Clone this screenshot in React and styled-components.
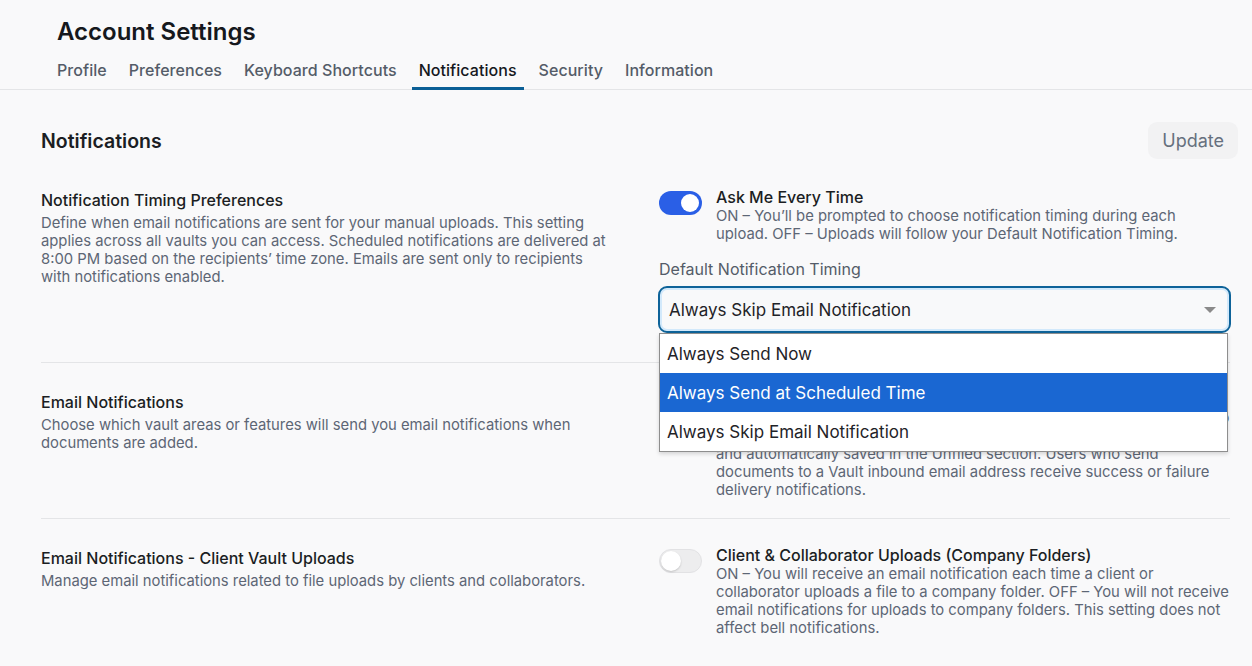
import React, { useState } from 'react';
import styled, { createGlobalStyle } from 'styled-components';

const GlobalStyle = createGlobalStyle`
  * { box-sizing: border-box; }
  body {
    margin: 0;
    background: #f9f9fa;
    font-family: Inter, "Liberation Sans", sans-serif;
    color: #1f2328;
  }
`;

// Header with page title and tab strip
const Header = styled.header`
  padding: 17px 0 0 50px;
  border-bottom: 1px solid #e4e5e7;
`;

const PageTitle = styled.h1`
  margin: 0 0 9px 7px;
  font-size: 24px;
  line-height: 30px;
  font-weight: 600;
  color: #15181d;
`;

const Tabs = styled.nav`
  display: flex;
  gap: 8px;
`;

const Tab = styled.button`
  background: none;
  border: none;
  border-bottom: 3px solid ${p => (p.$active ? '#0b5f96' : 'transparent')};
  margin-bottom: -1px;
  padding: 4px 7px 7px;
  font-family: inherit;
  font-size: 16px;
  line-height: 20px;
  font-weight: 500;
  letter-spacing: 0.05px;
  color: ${p => (p.$active ? '#15181d' : '#545c68')};
  cursor: pointer;
`;

const Content = styled.main`
  padding: 32px 14px 0 41px;
`;

const SectionHead = styled.div`
  display: flex;
  align-items: center;
  justify-content: space-between;
  margin-bottom: 2px;
`;

const SectionTitle = styled.h2`
  margin: 0;
  font-size: 19.5px;
  font-weight: 600;
  color: #1b1e23;
`;

const UpdateButton = styled.button`
  height: 37px;
  padding: 0 14px;
  border: none;
  border-radius: 9px;
  background: #f2f2f3;
  font-family: inherit;
  font-size: 18px;
  color: #66707e;
`;

const Rows = styled.div`
  margin-right: 8px;
`;

const Row = styled.section`
  display: grid;
  grid-template-columns: 1fr 1fr;
  gap: 47px;
  padding: 26px 0 19px;
  border-top: ${p => (p.$first ? 'none' : '1px solid #e4e5e7')};
`;

const RowInfo = styled.div`
  padding-top: 1px;
`;

const RowTitle = styled.h3`
  margin: 0 0 2px;
  font-size: 16px;
  line-height: 24px;
  font-weight: 500;
  color: #1b1e23;
`;

const Desc = styled.p`
  margin: 0;
  font-size: 14.8px;
  line-height: 18px;
  color: #5d6675;
`;

const Controls = styled.div`
  display: flex;
  flex-direction: column;
`;

const ToggleItem = styled.div`
  display: flex;
  align-items: flex-start;
  gap: 14px;
`;

const Switch = styled.button`
  position: relative;
  flex: none;
  width: 43px;
  height: 24px;
  margin-top: 4px;
  padding: 0;
  border-radius: 12px;
  border: ${p => (p.$on ? 'none' : '1px solid #e2e2e4')};
  background: ${p => (p.$on ? '#2a5fe6' : '#ededee')};
  cursor: pointer;

  &::after {
    content: '';
    position: absolute;
    top: ${p => (p.$on ? '3px' : '1px')};
    left: ${p => (p.$on ? '22px' : '1px')};
    width: ${p => (p.$on ? '18px' : '20px')};
    height: ${p => (p.$on ? '18px' : '20px')};
    border-radius: 50%;
    background: #fff;
    box-shadow: ${p => (p.$on ? 'none' : '0 1px 2px rgba(0,0,0,0.18)')};
  }
`;

const ToggleTitle = styled.div`
  font-size: 16px;
  line-height: 20px;
  font-weight: 500;
  color: #1b1e23;
`;

const FieldGroup = styled.div`
  margin: 16px 0 10px;
`;

const FieldLabel = styled.div`
  margin-bottom: 7px;
  font-size: 16px;
  line-height: 20px;
  color: #545c68;
`;

const SelectWrap = styled.div`
  position: relative;
  margin: 0 -1px 0 -1px;
`;

const SelectBox = styled.div`
  display: flex;
  align-items: center;
  justify-content: space-between;
  height: 47px;
  padding: 0 13px 0 9px;
  border: 2px solid #0e6399;
  border-radius: 9px;
  box-shadow: inset 0 0 0 2px #d2e9fb;
  background: #f8f9fa;
  font-size: 17px;
  color: #1f2328;
`;

const Caret = styled.span`
  width: 0;
  height: 0;
  border-left: 6px solid transparent;
  border-right: 6px solid transparent;
  border-top: 6px solid #8a8a8a;
`;

// Open option list, floating over the rows below
const OptionList = styled.ul`
  position: absolute;
  top: 100%;
  left: 1px;
  right: 3px;
  z-index: 10;
  margin: 0;
  padding: 0;
  list-style: none;
  background: #fff;
  border: 1px solid #8e8e8e;
  box-shadow: 0 2px 4px rgba(0, 0, 0, 0.15);
`;

const Option = styled.li`
  height: 39px;
  display: flex;
  align-items: center;
  padding-left: 7px;
  font-size: 17px;
  background: ${p => (p.$selected ? '#1a67d2' : 'transparent')};
  color: ${p => (p.$selected ? '#fff' : '#1f2328')};
`;

const tabs = ['Profile', 'Preferences', 'Keyboard Shortcuts', 'Notifications', 'Security', 'Information'];

const timingOptions = ['Always Send Now', 'Always Send at Scheduled Time', 'Always Skip Email Notification'];

const App = () => {
  const [askEveryTime, setAskEveryTime] = useState(true);
  const [inbound, setInbound] = useState(true);
  const [clientUploads, setClientUploads] = useState(false);

  return (
    <>
      <GlobalStyle />
      <Header>
        <PageTitle>Account Settings</PageTitle>
        <Tabs>
          {tabs.map(t => (
            <Tab key={t} $active={t === 'Notifications'}>{t}</Tab>
          ))}
        </Tabs>
      </Header>

      <Content>
        <SectionHead>
          <SectionTitle>Notifications</SectionTitle>
          <UpdateButton>Update</UpdateButton>
        </SectionHead>

        <Rows>
          <Row $first>
            <RowInfo>
              <RowTitle>Notification Timing Preferences</RowTitle>
              <Desc>
                Define when email notifications are sent for your manual uploads. This setting
                applies across all vaults you can access. Scheduled notifications are delivered at
                8:00 PM based on the recipients’ time zone. Emails are sent only to recipients
                with notifications enabled.
              </Desc>
            </RowInfo>
            <Controls>
              <ToggleItem>
                <Switch $on={askEveryTime} onClick={() => setAskEveryTime(!askEveryTime)} />
                <div>
                  <ToggleTitle>Ask Me Every Time</ToggleTitle>
                  <Desc>
                    ON – You’ll be prompted to choose notification timing during each
                    upload. OFF – Uploads will follow your Default Notification Timing.
                  </Desc>
                </div>
              </ToggleItem>
              <FieldGroup>
                <FieldLabel>Default Notification Timing</FieldLabel>
                <SelectWrap>
                  <SelectBox>
                    <span>Always Skip Email Notification</span>
                    <Caret />
                  </SelectBox>
                  <OptionList>
                    {timingOptions.map(o => (
                      <Option key={o} $selected={o === 'Always Send at Scheduled Time'}>{o}</Option>
                    ))}
                  </OptionList>
                </SelectWrap>
              </FieldGroup>
            </Controls>
          </Row>

          <Row>
            <RowInfo>
              <RowTitle>Email Notifications</RowTitle>
              <Desc>
                Choose which vault areas or features will send you email notifications when
                documents are added.
              </Desc>
            </RowInfo>
            <Controls>
              <ToggleItem>
                <Switch $on={inbound} onClick={() => setInbound(!inbound)} />
                <div>
                  <ToggleTitle>Vault Inbound Email</ToggleTitle>
                  <Desc>
                    ON – You will receive an email notification when a document is emailed
                    to your vault. OFF – Emailed documents are still uploaded
                    <br />
                    and automatically saved in the Unfiled section. Users who send
                    documents to a Vault inbound email address receive success or failure
                    delivery notifications.
                  </Desc>
                </div>
              </ToggleItem>
            </Controls>
          </Row>

          <Row>
            <RowInfo>
              <RowTitle>Email Notifications - Client Vault Uploads</RowTitle>
              <Desc>Manage email notifications related to file uploads by clients and collaborators.</Desc>
            </RowInfo>
            <Controls>
              <ToggleItem>
                <Switch $on={clientUploads} onClick={() => setClientUploads(!clientUploads)} />
                <div>
                  <ToggleTitle>Client &amp; Collaborator Uploads (Company Folders)</ToggleTitle>
                  <Desc>
                    ON – You will receive an email notification each time a client or
                    collaborator uploads a file to a company folder. OFF – You will not receive
                    email notifications for uploads to company folders. This setting does not
                    affect bell notifications.
                  </Desc>
                </div>
              </ToggleItem>
            </Controls>
          </Row>
        </Rows>
      </Content>
    </>
  );
};

export default App;
